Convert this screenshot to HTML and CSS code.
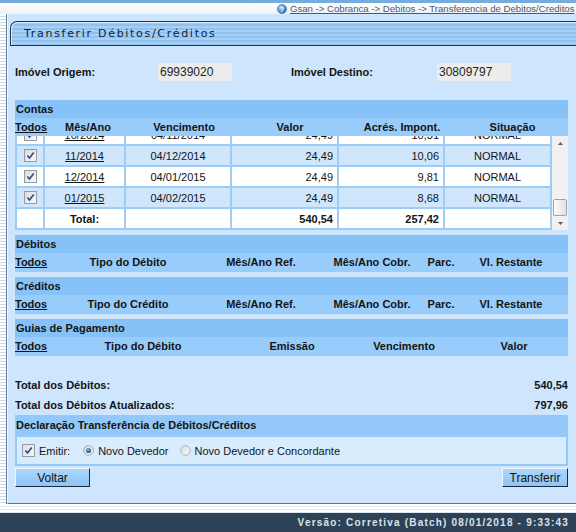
FILE: index.html
```html
<!DOCTYPE html>
<html lang="pt-BR">
<head>
    <meta charset="UTF-8">
    <title>Transferir Débitos/Créditos</title>
    <link rel="stylesheet" href="styles.css">
</head>
<body>

    <!-- Ícones usados nas listas -->
    <svg class="sprite" xmlns="http://www.w3.org/2000/svg">
        <defs>
            <linearGradient id="g-caixa" x1="0" y1="0" x2="1" y2="1">
                <stop offset="0" stop-color="#d9dde2"/>
                <stop offset="1" stop-color="#f7f8f9"/>
            </linearGradient>
            <radialGradient id="g-ponto" cx="40%" cy="35%" r="65%">
                <stop offset="0" stop-color="#7fc0e8"/>
                <stop offset="1" stop-color="#1d4f86"/>
            </radialGradient>
            <linearGradient id="g-radio" x1="0" y1="0" x2="1" y2="1">
                <stop offset="0" stop-color="#dcdcdc"/>
                <stop offset="1" stop-color="#fbfbfb"/>
            </linearGradient>
        </defs>
        <symbol id="i-marca" viewBox="0 0 13 13">
            <rect x=".5" y=".5" width="12" height="12" fill="url(#g-caixa)" stroke="#959ca4"/>
            <path d="M3.4 6.4l2.1 2.6 4.2-5.6" fill="none" stroke="#34487f" stroke-width="1.6"/>
        </symbol>
        <symbol id="i-radio" viewBox="0 0 12 12">
            <circle cx="6" cy="6" r="5.2" fill="url(#g-radio)" stroke="#9a9a9a" stroke-width=".8"/>
        </symbol>
        <symbol id="i-radio-on" viewBox="0 0 12 12">
            <circle cx="6" cy="6" r="5.2" fill="url(#g-radio)" stroke="#8a8a8a" stroke-width=".8"/>
            <circle cx="6" cy="6" r="2.8" fill="url(#g-ponto)"/>
        </symbol>
    </svg>

    <!-- Caminho no topo -->
    <div class="topo">
        <svg class="ajuda" width="10" height="10" viewBox="0 0 10 10">
            <defs>
                <radialGradient id="g-ajuda" cx="35%" cy="30%" r="75%">
                    <stop offset="0" stop-color="#b3d3f5"/>
                    <stop offset="1" stop-color="#2c64b0"/>
                </radialGradient>
            </defs>
            <circle cx="5" cy="5" r="4.6" fill="url(#g-ajuda)" stroke="#3a6aa8" stroke-width=".6"/>
            <text x="5" y="8" text-anchor="middle" font-size="7" font-weight="bold" fill="#ffffff" font-family="Liberation Sans, Arial, sans-serif">?</text>
        </svg>
        <a href="#">Gsan -&gt; Cobranca -&gt; Debitos -&gt; Transferencia de Debitos/Creditos</a>
    </div>

    <div class="pagina">
        <div class="lateral"></div>

        <div class="painel">
            <div class="aba">Transferir Débitos/Créditos</div>

            <!-- Imóveis -->
            <div class="imoveis">
                <span>Imóvel Origem:</span>
                <input type="text" value="69939020" readonly>
                <span></span>
                <span>Imóvel Destino:</span>
                <input type="text" value="30809797" readonly>
            </div>

            <!-- Contas -->
            <div class="secao">
                <div class="secao-titulo">Contas</div>
                <div class="cab cab-contas">
                    <a href="#">Todos</a>
                    <span>Mês/Ano</span>
                    <span>Vencimento</span>
                    <span>Valor</span>
                    <span>Acrés. Impont.</span>
                    <span>Situação</span>
                </div>
                <div class="lista">
                    <div class="rolagem" id="lista-contas">
                        <table>
                            <colgroup>
                                <col class="c-marca">
                                <col class="c-mes">
                                <col class="c-venc">
                                <col class="c-valor">
                                <col class="c-acres">
                                <col class="c-sit">
                            </colgroup>
                            <tbody>
                                <tr><td><svg class="marca"><use href="#i-marca"/></svg></td><td><a href="#">04/2013</a></td><td>04/05/2013</td><td class="num">26,25</td><td class="num">13,80</td><td>NORMAL</td></tr>
                                <tr><td><svg class="marca"><use href="#i-marca"/></svg></td><td><a href="#">05/2013</a></td><td>04/06/2013</td><td class="num">24,49</td><td class="num">13,65</td><td>NORMAL</td></tr>
                                <tr><td><svg class="marca"><use href="#i-marca"/></svg></td><td><a href="#">06/2013</a></td><td>04/07/2013</td><td class="num">24,49</td><td class="num">13,50</td><td>NORMAL</td></tr>
                                <tr><td><svg class="marca"><use href="#i-marca"/></svg></td><td><a href="#">07/2013</a></td><td>04/08/2013</td><td class="num">24,49</td><td class="num">13,30</td><td>NORMAL</td></tr>
                                <tr><td><svg class="marca"><use href="#i-marca"/></svg></td><td><a href="#">08/2013</a></td><td>04/09/2013</td><td class="num">24,49</td><td class="num">13,10</td><td>NORMAL</td></tr>
                                <tr><td><svg class="marca"><use href="#i-marca"/></svg></td><td><a href="#">09/2013</a></td><td>04/10/2013</td><td class="num">24,49</td><td class="num">12,93</td><td>NORMAL</td></tr>
                                <tr><td><svg class="marca"><use href="#i-marca"/></svg></td><td><a href="#">10/2013</a></td><td>04/11/2013</td><td class="num">24,49</td><td class="num">12,77</td><td>NORMAL</td></tr>
                                <tr><td><svg class="marca"><use href="#i-marca"/></svg></td><td><a href="#">11/2013</a></td><td>04/12/2013</td><td class="num">24,49</td><td class="num">12,54</td><td>NORMAL</td></tr>
                                <tr><td><svg class="marca"><use href="#i-marca"/></svg></td><td><a href="#">12/2013</a></td><td>04/01/2014</td><td class="num">24,49</td><td class="num">12,30</td><td>NORMAL</td></tr>
                                <tr><td><svg class="marca"><use href="#i-marca"/></svg></td><td><a href="#">01/2014</a></td><td>04/02/2014</td><td class="num">24,49</td><td class="num">12,06</td><td>NORMAL</td></tr>
                                <tr><td><svg class="marca"><use href="#i-marca"/></svg></td><td><a href="#">02/2014</a></td><td>04/03/2014</td><td class="num">24,49</td><td class="num">11,83</td><td>NORMAL</td></tr>
                                <tr><td><svg class="marca"><use href="#i-marca"/></svg></td><td><a href="#">03/2014</a></td><td>04/04/2014</td><td class="num">24,49</td><td class="num">11,59</td><td>NORMAL</td></tr>
                                <tr><td><svg class="marca"><use href="#i-marca"/></svg></td><td><a href="#">04/2014</a></td><td>04/05/2014</td><td class="num">24,49</td><td class="num">11,35</td><td>NORMAL</td></tr>
                                <tr><td><svg class="marca"><use href="#i-marca"/></svg></td><td><a href="#">05/2014</a></td><td>04/06/2014</td><td class="num">24,49</td><td class="num">11,12</td><td>NORMAL</td></tr>
                                <tr><td><svg class="marca"><use href="#i-marca"/></svg></td><td><a href="#">06/2014</a></td><td>04/07/2014</td><td class="num">24,49</td><td class="num">10,88</td><td>NORMAL</td></tr>
                                <tr><td><svg class="marca"><use href="#i-marca"/></svg></td><td><a href="#">07/2014</a></td><td>04/08/2014</td><td class="num">24,49</td><td class="num">10,75</td><td>NORMAL</td></tr>
                                <tr><td><svg class="marca"><use href="#i-marca"/></svg></td><td><a href="#">08/2014</a></td><td>04/09/2014</td><td class="num">24,49</td><td class="num">10,62</td><td>NORMAL</td></tr>
                                <tr><td><svg class="marca"><use href="#i-marca"/></svg></td><td><a href="#">09/2014</a></td><td>04/10/2014</td><td class="num">24,49</td><td class="num">10,47</td><td>NORMAL</td></tr>
                                <tr><td><svg class="marca"><use href="#i-marca"/></svg></td><td><a href="#">10/2014</a></td><td>04/11/2014</td><td class="num">24,49</td><td class="num">10,31</td><td>NORMAL</td></tr>
                                <tr><td><svg class="marca"><use href="#i-marca"/></svg></td><td><a href="#">11/2014</a></td><td>04/12/2014</td><td class="num">24,49</td><td class="num">10,06</td><td>NORMAL</td></tr>
                                <tr><td><svg class="marca"><use href="#i-marca"/></svg></td><td><a href="#">12/2014</a></td><td>04/01/2015</td><td class="num">24,49</td><td class="num">9,81</td><td>NORMAL</td></tr>
                                <tr><td><svg class="marca"><use href="#i-marca"/></svg></td><td><a href="#">01/2015</a></td><td>04/02/2015</td><td class="num">24,49</td><td class="num">8,68</td><td>NORMAL</td></tr>
                                <tr class="total"><td></td><td>Total:</td><td></td><td class="num">540,54</td><td class="num">257,42</td><td></td></tr>
                            </tbody>
                        </table>
                    </div>
                    <div class="barra">
                        <div class="barra-seta">
                            <svg width="5" height="3" viewBox="0 0 5 3"><path d="M0 3L2.5 0 5 3z" fill="#5c5c5c"/></svg>
                        </div>
                        <div class="barra-trilho">
                            <div class="barra-cursor"></div>
                        </div>
                        <div class="barra-seta">
                            <svg width="5" height="3" viewBox="0 0 5 3"><path d="M0 0L2.5 3 5 0z" fill="#5c5c5c"/></svg>
                        </div>
                    </div>
                </div>
            </div>

            <!-- Débitos -->
            <div class="secao">
                <div class="secao-titulo">Débitos</div>
                <div class="cab cab-debitos">
                    <a href="#">Todos</a>
                    <span>Tipo do Débito</span>
                    <span>Mês/Ano Ref.</span>
                    <span>Mês/Ano Cobr.</span>
                    <span>Parc.</span>
                    <span>Vl. Restante</span>
                </div>
            </div>

            <!-- Créditos -->
            <div class="secao">
                <div class="secao-titulo">Créditos</div>
                <div class="cab cab-debitos">
                    <a href="#">Todos</a>
                    <span>Tipo do Crédito</span>
                    <span>Mês/Ano Ref.</span>
                    <span>Mês/Ano Cobr.</span>
                    <span>Parc.</span>
                    <span>Vl. Restante</span>
                </div>
            </div>

            <!-- Guias de Pagamento -->
            <div class="secao">
                <div class="secao-titulo">Guias de Pagamento</div>
                <div class="cab cab-guias">
                    <a href="#">Todos</a>
                    <span>Tipo do Débito</span>
                    <span>Emissão</span>
                    <span>Vencimento</span>
                    <span>Valor</span>
                </div>
            </div>

            <!-- Totais -->
            <div class="totais">
                <div class="total-linha"><span>Total dos Débitos:</span><span>540,54</span></div>
                <div class="total-linha"><span>Total dos Débitos Atualizados:</span><span>797,96</span></div>
            </div>

            <!-- Declaração -->
            <div class="declaracao-titulo">Declaração Transferência de Débitos/Créditos</div>
            <div class="declaracao">
                <svg class="marca marca-emitir"><use href="#i-marca"/></svg>
                <span class="rotulo">Emitir:</span>
                <label class="opcao"><svg class="radio"><use href="#i-radio-on"/></svg>Novo Devedor</label>
                <label class="opcao"><svg class="radio"><use href="#i-radio"/></svg>Novo Devedor e Concordante</label>
            </div>

            <div class="botoes">
                <button class="botao botao-voltar">Voltar</button>
                <button class="botao botao-transferir">Transferir</button>
            </div>
        </div>
    </div>

    <div class="faixa"></div>
    <div class="rodape">Versão: Corretiva (Batch) 08/01/2018 - 9:33:43</div>

    <script>
        // Mostra o final da lista de contas (linha do total)
        const listaContas = document.getElementById('lista-contas');
        listaContas.scrollTop = listaContas.scrollHeight;
    </script>

</body>
</html>
```

FILE: styles.css
```css
/* Estilos gerais */
body {
    margin: 0;
    font-family: "Liberation Sans", Arial, sans-serif;
    font-size: 11px;
    color: #141414;
    background-color: #cde5fd;
    overflow: hidden;
}

a {
    color: #141414;
}

.sprite {
    position: absolute;
    width: 0;
    height: 0;
}

/* Faixa do topo com o caminho */
.topo {
    display: flex;
    align-items: center;
    gap: 3px;
    height: 11px;
    padding-left: 277px;
    border-top: 3px solid #76abe0;
    background: linear-gradient(#ffffff, #edf2f8);
    white-space: nowrap;
    overflow: hidden;
}

.topo a {
    font-size: 9.6px;
    color: #4b5a6e;
}

.ajuda {
    flex: none;
}

/* Área principal */
.pagina {
    display: flex;
}

.lateral {
    width: 6px;
    background: repeating-linear-gradient(#ffffff 0 2px, #c8d9ea 2px 3px);
    border-right: 1px solid #6b8198;
}

.painel {
    flex: 1;
    padding: 7px 8px 16px 7px;
    border-left: 1px solid #eef6ff;
    border-bottom: 1px solid #5e728a;
}

/* Aba do título */
.aba {
    height: 23px;
    line-height: 23px;
    margin: 0 -8px 0 -5px;
    padding-left: 13px;
    border: 1px solid #26374a;
    border-right: none;
    border-radius: 7px 0 0 0;
    background: repeating-linear-gradient(#a7d0f6 0 2px, #91c2ef 2px 4px);
    box-shadow: inset 1px 1px 0 #d6ebfd;
    font-family: "DejaVu Sans", Verdana, sans-serif;
    font-size: 11px;
    letter-spacing: 1.7px;
    color: #0f2236;
}

/* Imóveis */
.imoveis {
    display: grid;
    grid-template-columns: 143px 74px 59px 146px 74px;
    align-items: center;
    margin: 17px 0 19px;
    font-weight: bold;
}

.imoveis input {
    box-sizing: border-box;
    width: 74px;
    height: 18px;
    padding: 0 2px;
    border: none;
    background-color: #ececec;
    font: 12px "Liberation Sans", Arial, sans-serif;
    color: #1e1e1e;
}

/* Seções */
.secao + .secao {
    margin-top: 5px;
}

.secao-titulo {
    height: 18px;
    line-height: 18px;
    padding-left: 1px;
    background-color: #86c1f7;
    font-weight: bold;
}

.cab {
    display: grid;
    justify-items: center;
    height: 19px;
    line-height: 19px;
    background-color: #98ccfa;
    font-weight: bold;
}

.cab > :first-child {
    justify-self: start;
}

.cab-contas {
    grid-template-columns: 35px 76px 116px 96px 128px 93px 1fr;
    height: 18px;
    line-height: 18px;
}

.cab-debitos {
    grid-template-columns: 35px 156px 110px 112px 26px 114px;
}

.cab-guias {
    grid-template-columns: 35px 186px 112px 112px 108px;
}

/* Lista de contas */
.lista {
    display: flex;
    height: 94px;
}

.rolagem {
    flex: 1;
    overflow: hidden;
    background-color: #9dcdf6;
}

.rolagem table {
    width: 100%;
    border-spacing: 2px;
    table-layout: fixed;
}

.c-marca { width: 26px; }
.c-mes { width: 79px; }
.c-venc { width: 104px; }
.c-valor { width: 105px; }
.c-acres { width: 104px; }
.c-sit { width: 105px; }

.rolagem td {
    height: 19px;
    padding: 0 4px;
    text-align: center;
    white-space: nowrap;
    background-color: #ffffff;
}

.rolagem tr:nth-child(even) td {
    background-color: #cfe6fd;
}

.rolagem td.num {
    text-align: right;
}

.rolagem .total td {
    font-weight: bold;
}

.marca {
    display: block;
    width: 13px;
    height: 13px;
    margin: 0 auto;
}

/* Barra de rolagem */
.barra {
    display: flex;
    flex-direction: column;
    width: 16px;
    background-color: #f1f1f1;
}

.barra-seta {
    display: flex;
    align-items: center;
    justify-content: center;
    height: 14px;
}

.barra-trilho {
    flex: 1;
    display: flex;
    flex-direction: column;
    justify-content: flex-end;
}

.barra-cursor {
    box-sizing: border-box;
    height: 17px;
    margin: 0 1px;
    border: 1px solid #a3a3a3;
    border-radius: 2px;
    background: linear-gradient(90deg, #fbfbfb, #e2e2e2);
}

/* Totais */
.totais {
    margin-top: 19px;
}

.total-linha {
    display: flex;
    justify-content: space-between;
    height: 20px;
    line-height: 20px;
    font-weight: bold;
}

/* Declaração */
.declaracao-titulo {
    height: 20px;
    line-height: 20px;
    padding-left: 1px;
    background-color: #93c8f8;
    font-weight: bold;
}

.declaracao {
    display: flex;
    align-items: center;
    height: 27px;
    padding-left: 5px;
    border: 2px solid #95c9f8;
    background-color: #d8ecfe;
}

.declaracao .marca-emitir {
    margin: 0 4px 0 0;
}

.rotulo {
    margin-right: 13px;
}

.opcao {
    display: flex;
    align-items: center;
}

.opcao + .opcao {
    margin-left: 11px;
}

.radio {
    width: 11px;
    height: 11px;
    margin-right: 4px;
}

/* Botões */
.botoes {
    display: flex;
    justify-content: space-between;
    margin-top: 2px;
}

.botao {
    box-sizing: border-box;
    height: 19px;
    padding: 0;
    border: 1px solid;
    border-color: #eef7ff #1c2c3e #1c2c3e #eef7ff;
    background: linear-gradient(#acd6fb, #8fc4f5);
    font: 12px "Liberation Sans", Arial, sans-serif;
    color: #111111;
}

.botao-voltar {
    width: 75px;
}

.botao-transferir {
    width: 66px;
}

/* Rodapé */
.faixa {
    height: 9px;
    background: repeating-linear-gradient(#ffffff 0 2px, #dde5ee 2px 3px);
}

.rodape {
    height: 19px;
    line-height: 19px;
    padding-right: 7px;
    background-color: #2e4257;
    color: #dbe2e9;
    text-align: right;
    font-weight: bold;
    font-size: 10px;
    letter-spacing: 1.2px;
}
```
